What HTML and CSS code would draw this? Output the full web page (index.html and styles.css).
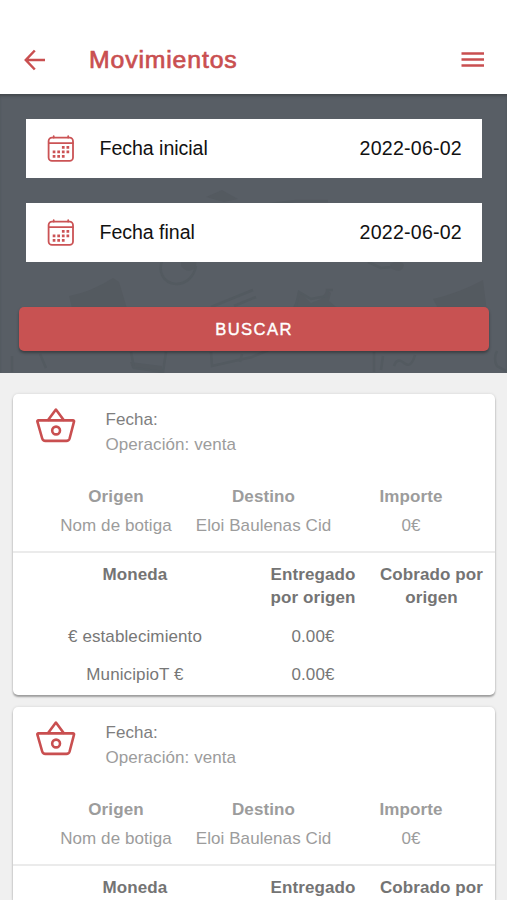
FILE: index.html
```html
<!DOCTYPE html>
<html lang="es">
<head>
<meta charset="utf-8">
<title>Movimientos</title>
<link rel="stylesheet" href="styles.css">
</head>
<body>
<svg class="defs" width="0" height="0" aria-hidden="true">
  <symbol id="calendar" viewBox="0 0 28 28">
    <g fill="none" stroke="currentColor" stroke-width="1.8" stroke-linecap="round">
      <rect x="1.6" y="2.6" width="24.4" height="23.2" rx="3.4"/>
      <path d="M1.9 8.2h24M6.7 1.2v1.3M21.2 1.2v1.3"/>
    </g>
    <path fill="none" stroke="currentColor" stroke-width="2.7" d="M14.9 12.4h2.7M19.5 12.4h2.7M5.7 16.9h2.7M10.3 16.9h2.7M14.9 16.9h2.7M19.5 16.9h2.7M5.7 21.3h2.7M10.3 21.3h2.7M14.9 21.3h2.7"/>
  </symbol>
  <symbol id="basket" viewBox="0 0 40 36">
    <g fill="none" stroke="currentColor" stroke-width="2.6" stroke-linejoin="round" stroke-linecap="round">
      <path d="M2.4 13.4Q1.1 13.4 1.4 14.7L6.2 31.5Q6.9 33.9 9.4 33.9H30.4Q32.9 33.9 33.6 31.5L38 14.7Q38.3 13.4 37 13.4Z"/>
      <path d="M12.3 12.8L19.9 2.5L27.5 12.8"/>
      <circle cx="20.1" cy="23.5" r="3.9"/>
    </g>
  </symbol>
</svg>
<header class="bar">
  <svg class="back" viewBox="0 0 22 22"><path d="M10.8 1.5L1.8 11L10.8 20.5M2 11H21" /></svg>
  <h1>Movimientos</h1>
  <svg class="menu" viewBox="0 0 24 18"><path d="M.5 2.5H23M.5 8.5H23M.5 14.5H23"/></svg>
</header>
<section class="search">
  <svg class="doodles" viewBox="0 0 507 279" aria-hidden="true">
    <path class="shade" d="M69 202q22-4 44-18l6 4 9 30H73zM181 162l16-2-1 13q-8 8-15-1zM433 205q26-6 50-19l4 32h-47zM206 103l16-7 16 9-14 3zM130 268l32 4v6l-30-4zM293 213l8-14 10 10 10-4 6-9 4 3-2 8 12 10zM390 170q10-6 14 1-2 9-12 4z"/>
    <path d="M163 165c-6 12 0 24 13 25 11 0 18-8 20-18M211 213l42-17M234 212l22-9M295 216l4-18 12 7 16-3 0-6 6 0M368 168l13 6 11-1M270 110l26-3h32M131 258l3 16 29 4 3-20M211 258l1 14 40-9 24-10M242 260l-2 8M374 258v20M383 262l-2 14M394 272q3-9 10-3t11-8M497 257q-4 8 0 15l9 5M12 262v16M40 260l6 14"/>
  </svg>
  <div class="field"><svg><use href="#calendar"/></svg><label>Fecha inicial</label><span>2022-06-02</span></div>
  <div class="field"><svg><use href="#calendar"/></svg><label>Fecha final</label><span>2022-06-02</span></div>
  <button type="button">BUSCAR</button>
</section>
<main>
  <article class="card">
    <div class="head"><svg><use href="#basket"/></svg><div><p class="date">Fecha:</p><p>Operación: venta</p></div></div>
    <div class="parties"><b>Origen</b><b>Destino</b><b>Importe</b><span>Nom de botiga</span><span>Eloi Baulenas Cid</span><span>0€</span></div>
    <div class="coins"><b>Moneda</b><b>Entregado<br>por origen</b><b>Cobrado por<br>origen</b><span>€ establecimiento</span><span>0.00€</span><span></span><span>MunicipioT €</span><span>0.00€</span><span></span></div>
  </article>
  <article class="card last">
    <div class="head"><svg><use href="#basket"/></svg><div><p class="date">Fecha:</p><p>Operación: venta</p></div></div>
    <div class="parties"><b>Origen</b><b>Destino</b><b>Importe</b><span>Nom de botiga</span><span>Eloi Baulenas Cid</span><span>0€</span></div>
    <div class="coins"><b>Moneda</b><b>Entregado</b><b>Cobrado por</b></div>
  </article>
</main>
</body>
</html>
```
FILE: styles.css
```css
* { box-sizing: border-box; }
body { margin: 0; height: 900px; overflow: hidden; background: #f0f0f0; font-family: "Liberation Sans", Arial, sans-serif; }
p, h1 { margin: 0; }
.defs { position: absolute; }
.bar { height: 94px; background: #fff; padding: 25px 22px 0 24px; display: flex; align-items: center; color: #c94f50; }
.bar svg { fill: none; stroke: currentColor; stroke-width: 2.5; }
.back { width: 22px; height: 22px; }
.menu { width: 24px; height: 18px; margin-left: auto; }
h1 { margin-left: 43px; font-size: 24.8px; line-height: 30px; font-weight: 400; letter-spacing: .85px; -webkit-text-stroke: .7px currentColor; }
.search { position: relative; height: 279px; background: #585e65; padding: 25px 18px 0 19px; box-shadow: inset 0 3px 3px -1px #43484d; }
.doodles { position: absolute; left: 0; top: 0; width: 507px; height: 279px; fill: none; stroke: #535a60; stroke-width: 2.5; }
.shade { fill: #545a60; stroke: none; }
.field { position: relative; height: 59px; margin: 0 7px 25px; padding: 0 20px 0 21px; background: #fff; display: flex; align-items: center; font-size: 19.6px; color: #111; }
.field svg { width: 28px; height: 28px; color: #cb5355; margin-top: 1px; }
.field label { margin-left: 24.5px; letter-spacing: -.05px; }
.field span { margin-left: auto; letter-spacing: .22px; }
button { position: relative; display: block; width: 470px; height: 44px; margin-top: 45px; padding: 1px 0 0; border: 0; border-radius: 5px; background: #c85252; box-shadow: 0 2px 3px rgba(0,0,0,.35); color: #fff; font: 400 16.6px/43px "Liberation Sans", Arial, sans-serif; letter-spacing: 1.4px; -webkit-text-stroke: .4px currentColor; }
main { padding: 21px 12px 0 13px; }
.card { height: 301px; margin-bottom: 12px; background: #fff; border-radius: 5px; box-shadow: 0 2px 2px rgba(0,0,0,.32), 0 0 3px rgba(0,0,0,.12); color: #777; font-size: 17px; letter-spacing: .1px; }
.last { height: 193px; margin-bottom: 0; border-radius: 5px 5px 0 0; }
.head { height: 83px; padding: 13px 0 0 23px; display: flex; }
.head svg { width: 40px; height: 36px; color: #c94f50; }
.head div { margin-left: 29.5px; line-height: 25px; color: #9c9c9c; letter-spacing: .07px; }
.head .date { color: #7e7e7e; }
.parties { height: 76px; padding: 5px 9px 0 29px; display: grid; grid-template-columns: 148px 147px 148px; grid-auto-rows: 29px; line-height: 29px; text-align: center; color: #9c9c9c; border-bottom: 2px solid #ebebeb; }
.parties span { letter-spacing: .08px; }
.coins { padding: 10px 4px 0; display: grid; grid-template-columns: 236px 120px 117px; grid-auto-rows: 38px; line-height: 23px; text-align: center; }
.coins b { height: 56px; color: #747474; }
.coins span { line-height: 34px; position: relative; top: 19px; }
.last .coins b { height: 23px; }
```
